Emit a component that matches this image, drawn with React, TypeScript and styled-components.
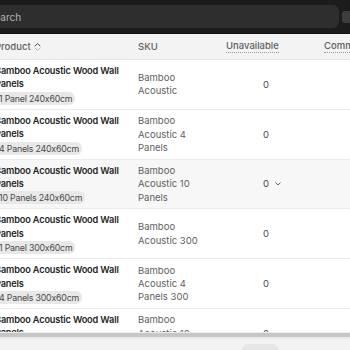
import React from "react";
import styled, { createGlobalStyle } from "styled-components";

const Global = createGlobalStyle`
  html, body { margin: 0; padding: 0; background: #f3f3f3; overflow: hidden; }
  body {
    font-family: Inter, "Noto Sans", sans-serif;
    -webkit-font-smoothing: antialiased;
    font-feature-settings: "calt" 0;
  }
  * { box-sizing: border-box; }
`;

const Page = styled.div`
  width: 350px;
  height: 350px;
  overflow: hidden;
  display: flex;
  flex-direction: column;
  background: #f3f3f3;
`;

const TopBar = styled.div`
  height: 34px;
  flex: none;
  background: #1c1c1c;
  display: flex;
  align-items: center;
  gap: 3px;
  margin-left: -20px;
  border-bottom: 1px solid #111;
`;

const SearchBox = styled.div`
  flex: 1;
  height: 23px;
  border-radius: 6px;
  background: #2e2e2e;
  display: flex;
  align-items: center;
  padding-left: 8px;
  font-size: 10px;
  color: #b3b3b3;
`;

const BarButton = styled.div`
  width: 8px;
  height: 12px;
  flex: none;
  background: #3d3d3d;
  border-radius: 3px 0 0 3px;
`;

const TableWrap = styled.div`
  flex: 1;
  min-height: 0;
  overflow: hidden;
  margin-left: -5px;
  background: #fff;
`;

const Grid = styled.div`
  display: grid;
  grid-template-columns: 143px 88px 98px 80px;
`;

const HeadCell = styled.div<{ $pad?: number }>`
  height: 26px;
  background: #f3f3f3;
  border-bottom: 1px solid #e6e6e6;
  display: flex;
  align-items: center;
  gap: 3px;
  padding-left: ${(p) => p.$pad ?? 0}px;
  font-size: 9.5px;
  font-weight: 500;
  color: #616161;
  white-space: nowrap;
`;

const Dotted = styled.span`
  border-bottom: 1px dotted #9a9a9a;
  padding-bottom: 1px;
`;

const Cell = styled.div<{ $alt?: boolean; $pad?: number }>`
  min-height: 49px;
  background: ${(p) => (p.$alt ? "#f7f7f7" : "#fff")};
  border-bottom: 1px solid #ececec;
  padding: 4px 0 4px ${(p) => p.$pad ?? 0}px;
  display: flex;
  align-items: center;
  font-size: 9.5px;
  line-height: 13.4px;
`;

const ProductBlock = styled.div`
  display: flex;
  flex-direction: column;
  align-items: flex-start;
`;

const Name = styled.div`
  font-weight: 600;
  font-size: 9.2px;
  letter-spacing: -0.15px;
  color: #262626;
  width: 132px;
`;

const Badge = styled.span`
  margin-top: 1px;
  margin-left: 1px;
  height: 13px;
  line-height: 13px;
  padding: 0 3px;
  border-radius: 6px;
  background: #e8e8e8;
  color: #4a4a4a;
  font-size: 8.8px;
  letter-spacing: -0.2px;
  white-space: nowrap;
`;

const Sku = styled.div`
  width: 62px;
  color: #616161;
`;

const Num = styled.div`
  color: #4a4a4a;
  display: flex;
  align-items: center;
  gap: 6px;
`;

const ScrollBar = styled.div`
  height: 6px;
  flex: none;
  background: #ececec;
  display: flex;
  align-items: center;
`;

const ScrollThumb = styled.div`
  height: 4px;
  width: 100%;
  background: #c6c6c6;
`;

const Footer = styled.div`
  height: 12px;
  flex: none;
  background: #f3f3f3;
  border-top: 1px solid #e8e8e8;
  display: flex;
  padding-left: 242px;
  padding-top: 5px;
`;

const Pill = styled.div`
  width: 37px;
  height: 10px;
  border-radius: 6px 6px 0 0;
  background: #e6e6e6;
`;

const SortIcon = () => (
  <svg width="7" height="10" viewBox="0 0 7 10">
    <path d="M1 4 L3.5 1.5 L6 4" fill="none" stroke="#4a4a4a" strokeWidth="1" strokeLinecap="round" strokeLinejoin="round" />
    <path d="M1 6 L3.5 8.5 L6 6" fill="none" stroke="#b5b5b5" strokeWidth="1" strokeLinecap="round" strokeLinejoin="round" />
  </svg>
);

const Chevron = () => (
  <svg width="6" height="4" viewBox="0 0 6 4">
    <path d="M0.8 0.8 L3 3 L5.2 0.8" fill="none" stroke="#616161" strokeWidth="1" strokeLinecap="round" strokeLinejoin="round" />
  </svg>
);

const rows = [
  { badge: "1 Panel 240x60cm", sku: "Bamboo Acoustic" },
  { badge: "4 Panels 240x60cm", sku: "Bamboo Acoustic 4 Panels" },
  { badge: "10 Panels 240x60cm", sku: "Bamboo Acoustic 10 Panels", alt: true, chevron: true },
  { badge: "1 Panel 300x60cm", sku: "Bamboo Acoustic 300" },
  { badge: "4 Panels 300x60cm", sku: "Bamboo Acoustic 4 Panels 300" },
  { badge: "10 Panels 300x60cm", sku: "Bamboo Acoustic 10 Panels 300" },
];

export default function App() {
  return (
    <Page>
      <Global />
      <TopBar>
        <SearchBox>Search</SearchBox>
        <BarButton />
      </TopBar>
      <TableWrap>
        <Grid>
          <HeadCell>
            Product <SortIcon />
          </HeadCell>
          <HeadCell>SKU</HeadCell>
          <HeadCell>
            <Dotted>Unavailable</Dotted>
          </HeadCell>
          <HeadCell>
            <Dotted>Committed</Dotted>
          </HeadCell>
          {rows.map((r, i) => (
            <React.Fragment key={i}>
              <Cell $alt={r.alt}>
                <ProductBlock>
                  <Name>Bamboo Acoustic Wood Wall Panels</Name>
                  <Badge>{r.badge}</Badge>
                </ProductBlock>
              </Cell>
              <Cell $alt={r.alt}>
                <Sku>{r.sku}</Sku>
              </Cell>
              <Cell $alt={r.alt} $pad={37}>
                <Num>
                  0{r.chevron && <Chevron />}
                </Num>
              </Cell>
              <Cell $alt={r.alt} />
            </React.Fragment>
          ))}
        </Grid>
      </TableWrap>
      <ScrollBar>
        <ScrollThumb />
      </ScrollBar>
      <Footer>
        <Pill />
      </Footer>
    </Page>
  );
}
